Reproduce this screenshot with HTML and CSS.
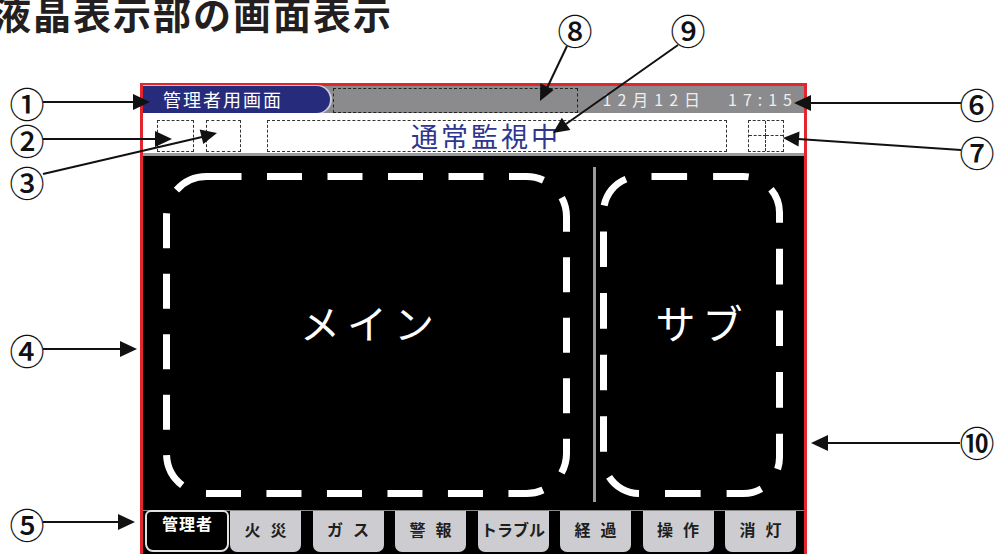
FILE: index.html
```html
<!DOCTYPE html>
<html lang="ja">
<head>
<meta charset="utf-8">
<title>液晶表示部の画面表示</title>
<link rel="stylesheet" href="styles.css">
</head>
<body>
<div class="page">
  <h1 class="title">液晶表示部の画面表示</h1>
  <div class="device">
    <div class="topbar">
      <div class="mode-pill">管理者用画面</div>
      <div class="msg-box"></div>
      <div class="clock">12月12日　17:15</div>
    </div>
    <div class="status-row">
      <div class="slot slot-a"></div>
      <div class="slot slot-b"></div>
      <div class="slot slot-status">通常監視中</div>
      <div class="slot slot-grid"><span></span><span></span><span></span><span></span></div>
    </div>
    <div class="views">
      <div class="view view-main">
        <svg class="view-frame" width="407" height="324" viewBox="0 0 407 324"><rect x="3.5" y="3.5" width="400" height="317" rx="40" ry="40" class="dash-main"/></svg>
        <span class="view-label">メイン</span>
      </div>
      <div class="divider"></div>
      <div class="view view-sub">
        <svg class="view-frame" width="183" height="324" viewBox="0 0 183 324"><rect x="3.5" y="3.5" width="176" height="317" rx="36" ry="36" class="dash-sub"/></svg>
        <span class="view-label">サブ</span>
      </div>
    </div>
    <div class="tabs">
      <div class="tab tab-active">管理者</div>
      <div class="tab">火災</div>
      <div class="tab">ガス</div>
      <div class="tab">警報</div>
      <div class="tab tab-tight">トラブル</div>
      <div class="tab">経過</div>
      <div class="tab">操作</div>
      <div class="tab">消灯</div>
    </div>
  </div>
  <svg class="callouts" width="995" height="554" viewBox="0 0 995 554">
    <g class="nums">
      <text x="27" y="102">①</text>
      <text x="27" y="139">②</text>
      <text x="27" y="181">③</text>
      <text x="27" y="349">④</text>
      <text x="27" y="523">⑤</text>
      <text x="977" y="103">⑥</text>
      <text x="977" y="151">⑦</text>
      <text x="575" y="29">⑧</text>
      <text x="688" y="29">⑨</text>
      <text x="977" y="441">⑩</text>
    </g>
    <g class="lines">
      <line x1="43" y1="102" x2="135" y2="102"/>
      <line x1="43" y1="139" x2="157" y2="139"/>
      <line x1="43" y1="174" x2="202" y2="137"/>
      <line x1="43" y1="349" x2="122" y2="349"/>
      <line x1="43" y1="522" x2="120" y2="522"/>
      <line x1="961" y1="103" x2="810" y2="103"/>
      <line x1="961" y1="150" x2="798" y2="139"/>
      <line x1="567" y1="46" x2="547" y2="88"/>
      <line x1="678" y1="45" x2="566" y2="124"/>
      <line x1="960" y1="443" x2="827" y2="443"/>
    </g>
    <g class="heads">
      <polygon points="133,94 150,102 133,110"/>
      <polygon points="155,131 172,139 155,147"/>
      <polygon points="203.3,144.1 217,133 199.7,129.5"/>
      <polygon points="120,341 137,349 120,357"/>
      <polygon points="118,514 135,522 118,530"/>
      <polygon points="811,95 794,103 811,111"/>
      <polygon points="798.5,146.6 783,138 799.5,131.6"/>
      <polygon points="553.7,89.9 540,101 540.3,83.3"/>
      <polygon points="570.4,129.9 553,133 561.8,117.7"/>
      <polygon points="828,435 811,443 828,451"/>
    </g>
  </svg>
</div>
</body>
</html>
```

FILE: styles.css
```css
* {
  box-sizing: border-box;
}

body {
  margin: 0;
  background: #ffffff;
  font-family: "Noto Sans CJK JP", "Noto Sans", sans-serif;
}

.page {
  position: relative;
  width: 995px;
  height: 554px;
  overflow: hidden;
  background: #ffffff;
}

.title {
  margin: -6px 0 0 -7px;
  height: 38px;
  font-size: 38px;
  line-height: 38px;
  font-weight: 700;
  letter-spacing: 2px;
  color: #231f20;
  white-space: nowrap;
}

.device {
  margin: 51px 0 0 140px;
  width: 667px;
  height: 471px;
  border: 3px solid #e3262b;
  border-bottom: 0;
  background: #000000;
  display: flex;
  flex-direction: column;
}

/* top bar */
.topbar {
  height: 27px;
  flex: none;
  background: #8b8b8d;
  display: flex;
  align-items: center;
}

.mode-pill {
  width: 187px;
  height: 27px;
  background: #262b7b;
  border-radius: 0 14px 14px 0;
  box-shadow: 1px 0 0 1px #c9cad6;
  color: #ffffff;
  font-size: 18px;
  line-height: 27px;
  letter-spacing: 2px;
  padding-left: 20px;
  white-space: nowrap;
}

.msg-box {
  margin-left: 3px;
  width: 245px;
  height: 25px;
  align-self: flex-end;
  border: 1px dashed #222222;
}

.clock {
  margin-left: auto;
  margin-right: 6px;
  color: #eeeeee;
  font-size: 16px;
  letter-spacing: 6px;
  line-height: 27px;
  white-space: nowrap;
}

/* status row */
.status-row {
  height: 43px;
  flex: none;
  background: #ffffff;
  border-bottom: 3px solid #9a9a9a;
  display: flex;
  align-items: flex-start;
  padding: 7px 0 0 14px;
}

.slot {
  height: 32px;
  border: 1px dashed #333333;
}

.slot-a {
  width: 37px;
}

.slot-b {
  margin-left: 12px;
  width: 35px;
}

.slot-status {
  margin-left: 26px;
  width: 460px;
  color: #2e3590;
  font-size: 27px;
  line-height: 30px;
  letter-spacing: 3px;
  text-align: center;
  padding-right: 22px;
  white-space: nowrap;
}

.slot-grid {
  margin-left: 21px;
  width: 36px;
  display: grid;
  grid-template-columns: 1fr 1fr;
  grid-template-rows: 1fr 1fr;
}

.slot-grid span:nth-child(1) {
  border-right: 1px dashed #333333;
  border-bottom: 1px dashed #333333;
}

.slot-grid span:nth-child(2) {
  border-bottom: 1px dashed #333333;
}

.slot-grid span:nth-child(3) {
  border-right: 1px dashed #333333;
}

/* views */
.views {
  flex: 1;
  background: #000000;
  display: flex;
  align-items: flex-start;
  padding: 17px 0 0 20px;
}

.view {
  position: relative;
  height: 324px;
  display: flex;
  align-items: center;
  justify-content: center;
  padding-bottom: 26px;
}

.view-main {
  width: 407px;
  padding-left: 8px;
}

.view-sub {
  margin-left: 4px;
  width: 183px;
  padding-left: 22px;
}

.view-frame {
  position: absolute;
  left: 0;
  top: 0;
}

.view-frame rect {
  fill: none;
  stroke: #ffffff;
  stroke-width: 7;
  stroke-dasharray: 35 25.5;
}

.view-frame .dash-sub {
  stroke-dasharray: 35.6 26;
  stroke-dashoffset: 49.6;
}

.view-label {
  position: relative;
  color: #ffffff;
  font-size: 40px;
  line-height: 40px;
  letter-spacing: 7px;
  white-space: nowrap;
}

.divider {
  margin: -6px 0 0 23px;
  width: 3px;
  height: 335px;
  background: #9b9b9b;
}

/* tabs */
.tabs {
  height: 44px;
  flex: none;
  border-top: 1px solid #8a8a8a;
  display: flex;
  align-items: flex-start;
  padding-left: 2px;
}

.tab {
  width: 71px;
  height: 41px;
  margin-left: 11.5px;
  background: #cdcdd1;
  border-radius: 0 0 7px 7px;
  color: #1e1e1e;
  font-size: 16px;
  font-weight: 700;
  line-height: 20px;
  letter-spacing: 10px;
  padding: 8px 0 0 10px;
  text-align: center;
  white-space: nowrap;
}

.tab-tight {
  letter-spacing: 0;
  padding-left: 0;
}

.tab-active {
  width: 84px;
  height: 42px;
  margin-left: 0;
  margin-top: -1px;
  background: #000000;
  border: 2px solid #e2e2e2;
  border-radius: 6px 6px 8px 8px;
  color: #ffffff;
  letter-spacing: 1px;
  padding: 1px 0 0 1px;
}

.tab-active + .tab {
  margin-left: 1px;
}

/* callouts */
.callouts {
  position: absolute;
  left: 0;
  top: 0;
  pointer-events: none;
}

.nums text {
  font-family: "Noto Sans CJK JP", sans-serif;
  font-size: 35px;
  font-weight: 500;
  fill: #111111;
  text-anchor: middle;
  dominant-baseline: central;
}

.lines line {
  stroke: #111111;
  stroke-width: 2;
}

.heads polygon {
  fill: #111111;
}
```
